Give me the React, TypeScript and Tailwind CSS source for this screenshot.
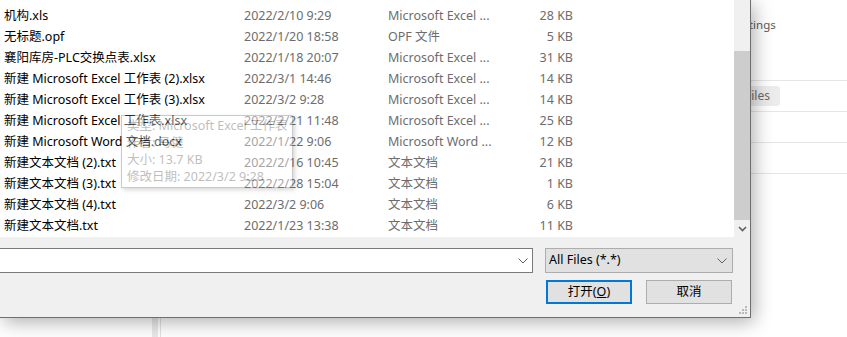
const rows = [
  ["汇总表.xlsx", "2022/2/11 10:02", "Microsoft Excel ...", "16 KB"],
  ["机构.xls", "2022/2/10 9:29", "Microsoft Excel ...", "28 KB"],
  ["无标题.opf", "2022/1/20 18:58", "OPF 文件", "5 KB"],
  ["襄阳库房-PLC交换点表.xlsx", "2022/1/18 20:07", "Microsoft Excel ...", "31 KB"],
  ["新建 Microsoft Excel 工作表 (2).xlsx", "2022/3/1 14:46", "Microsoft Excel ...", "14 KB"],
  ["新建 Microsoft Excel 工作表 (3).xlsx", "2022/3/2 9:28", "Microsoft Excel ...", "14 KB"],
  ["新建 Microsoft Excel 工作表.xlsx", "2022/2/21 11:48", "Microsoft Excel ...", "25 KB"],
  ["新建 Microsoft Word 文档.docx", "2022/1/22 9:06", "Microsoft Word ...", "12 KB"],
  ["新建文本文档 (2).txt", "2022/2/16 10:45", "文本文档", "21 KB"],
  ["新建文本文档 (3).txt", "2022/2/28 15:04", "文本文档", "1 KB"],
  ["新建文本文档 (4).txt", "2022/3/2 9:06", "文本文档", "6 KB"],
  ["新建文本文档.txt", "2022/1/23 13:38", "文本文档", "11 KB"],
];

function Chevron() {
  return (
    <svg width="10" height="6" viewBox="0 0 10 6" className="shrink-0">
      <polyline points="0.5,0.5 5,5 9.5,0.5" fill="none" stroke="#606060" strokeWidth="1" />
    </svg>
  );
}

function Grip() {
  const dots = [
    [6, 0],
    [3, 3],
    [6, 3],
    [0, 6],
    [3, 6],
    [6, 6],
  ];
  return (
    <svg width="8" height="8" viewBox="0 0 8 8" className="absolute right-[3px] bottom-[3px]">
      {dots.map(([x, y], i) => (
        <rect key={i} x={x} y={y} width="2" height="2" fill="#b9b9b9" />
      ))}
    </svg>
  );
}

function Background() {
  return (
    <div className="flex h-[337px] w-[847px] bg-white">
      <div className="w-[152px]" />
      <div className="w-[6px] bg-[#e9e9e9]" />
      <div className="w-[2px]" />
      <div className="flex flex-1 flex-col border-l border-[#e2e2e2]">
        <div className="flex h-[49px] items-center pl-[571px] text-[11.5px] text-[#5a5a5a]">Settings</div>
        <div className="h-[32px] border-b border-[#e6e6e6]" />
        <div className="flex h-[31px] items-center border-b border-[#e6e6e6] pl-[574px]">
          <span className="rounded-[3px] bg-[#ececec] px-[10px] py-[1px] text-[12px] text-[#6a6a6a]">Files</span>
        </div>
        <div className="h-[31px] border-b border-[#e6e6e6]" />
        <div className="h-[31px] border-b border-[#e6e6e6]" />
      </div>
    </div>
  );
}

export default function App() {
  return (
    <div className="relative h-[337px] w-[847px] overflow-hidden bg-white font-['Noto_Sans','Noto_Sans_CJK_SC',sans-serif] text-[12.5px]">
      <Background />
      <div className="absolute left-0 top-0 flex h-[318px] w-[751px] flex-col border-r border-b border-[#6f6f6f] bg-[#f0f0f0] shadow-[3px_4px_18px_rgba(0,0,0,0.32)]">
        <div className="flex h-[237px]">
          <div className="relative flex-1 overflow-hidden bg-white">
            <div className="-mt-[15px]">
              {rows.map(([name, date, type, size]) => (
                <div key={name} className="flex h-[21px] items-center whitespace-nowrap">
                  <span className="w-[244px] pl-[4px] text-black">{name}</span>
                  <span className="w-[144px] text-[#6d6d6d]">{date}</span>
                  <span className="w-[110px] text-[#6d6d6d]">{type}</span>
                  <span className="w-[75px] text-right text-[#6d6d6d]">{size}</span>
                </div>
              ))}
            </div>
            <div className="absolute left-[121px] top-[115px] flex h-[73px] w-[172px] flex-col border border-[#767676] bg-white px-[5px] pt-[1px] leading-[17px] whitespace-nowrap text-[#575757] opacity-[0.38] shadow-[2px_2px_4px_rgba(0,0,0,0.4)]">
              <span>类型: Microsoft Excel 工作表</span>
              <span>作者: 马健</span>
              <span>大小: 13.7 KB</span>
              <span>修改日期: 2022/3/2 9:28</span>
            </div>
          </div>
          <div className="flex w-[16px] flex-col bg-[#f0f0f0]">
            <div className="h-[51px]" />
            <div className="h-[169px] bg-[#cdcdcd]" />
            <div className="flex flex-1 items-center justify-center">
              <svg width="9" height="6" viewBox="0 0 9 6">
                <polyline points="1,1 4.5,4.5 8,1" fill="none" stroke="#606060" strokeWidth="1.6" />
              </svg>
            </div>
          </div>
        </div>
        <div className="relative flex flex-1 flex-col bg-[#f0f0f0] pt-[11px]">
          <div className="flex h-[25px] gap-[12px] pr-[17px]">
            <div className="flex flex-1 items-center justify-end border border-l-0 border-[#7a7a7a] bg-white pr-[4px]">
              <Chevron />
            </div>
            <div className="flex w-[188px] items-center justify-between border border-[#adadad] bg-[#e1e1e1] pl-[3px] pr-[5px] text-black">
              <span>All Files (*.*)</span>
              <Chevron />
            </div>
          </div>
          <div className="mt-[7px] flex h-[24px] justify-end gap-[14px] pr-[18px]">
            <button className="flex w-[86px] items-center justify-center border-2 border-[#0078d7] bg-[#e1e1e1] text-black">
              打开(<span className="underline">O</span>)
            </button>
            <button className="flex w-[86px] items-center justify-center border border-[#adadad] bg-[#e1e1e1] text-black">
              取消
            </button>
          </div>
          <Grip />
        </div>
      </div>
    </div>
  );
}
